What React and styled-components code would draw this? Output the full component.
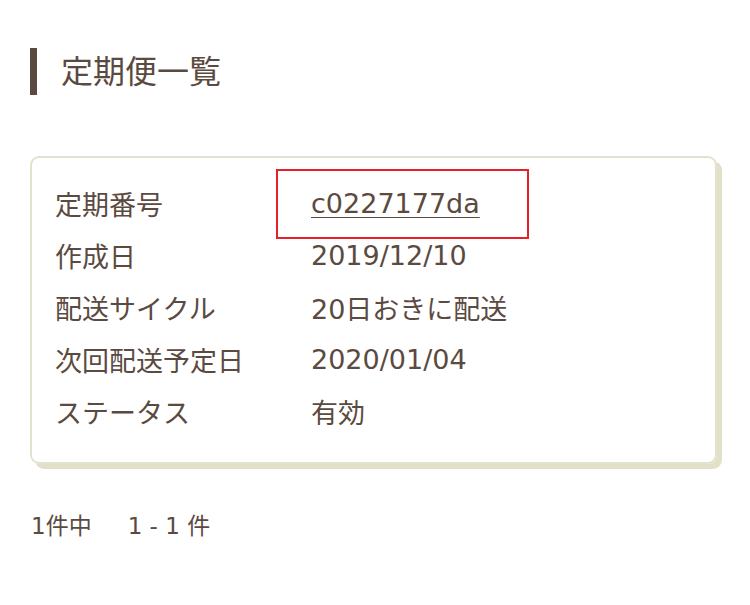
import React from "react";
import styled, { createGlobalStyle } from "styled-components";

const Global = createGlobalStyle`
  html, body { margin: 0; padding: 0; background: #fff; }
  body {
    font-family: "DejaVu Sans", "Noto Sans CJK JP", sans-serif;
    color: #5b4a3f;
  }
`;

const Page = styled.div`
  width: 750px;
  padding: 48px 30px 0 30px;
  box-sizing: border-box;
`;

const Title = styled.h1`
  margin: 0;
  height: 47px;
  display: flex;
  align-items: center;
  border-left: 7px solid #5b4a3f;
  padding-left: 24px;
  font-size: 32px;
  font-weight: normal;
  line-height: 1;
`;

const Card = styled.div`
  margin-top: 61px;
  width: 687px;
  box-sizing: border-box;
  border: 2px solid #e4e1cd;
  border-radius: 9px;
  box-shadow: 5px 5px 0 #e3e0ca;
  padding: 19px 24px 25px 23px;
`;

const Grid = styled.dl`
  margin: 0;
  display: grid;
  grid-template-columns: 256px 1fr;
  grid-auto-rows: 52px;
  align-items: center;
  font-size: 27px;
`;

const Label = styled.dt`
  margin: 0;
`;

const Value = styled.dd`
  margin: 0;
`;

const LinkWrap = styled.span`
  position: relative;
  display: inline-block;
  &::after {
    content: "";
    position: absolute;
    left: -35px;
    top: 50%;
    transform: translateY(-50%);
    margin-top: 1px;
    width: 253px;
    height: 70px;
    box-sizing: border-box;
    border: 2px solid #e6202b;
    pointer-events: none;
  }
`;

const Link = styled.a`
  color: #5b4a3f;
  text-decoration: underline;
  text-underline-offset: 4px;
  text-decoration-thickness: 1px;
`;

const Footer = styled.div`
  margin-top: 43px;
  font-size: 23px;
  display: flex;
  gap: 36px;
  padding-left: 1px;
`;

const rows = [
  ["作成日", "2019/12/10"],
  ["配送サイクル", "20日おきに配送"],
  ["次回配送予定日", "2020/01/04"],
  ["ステータス", "有効"],
];

export default function App() {
  return (
    <>
      <Global />
      <Page>
        <Title>定期便一覧</Title>
        <Card>
          <Grid>
            <Label>定期番号</Label>
            <Value>
              <LinkWrap>
                <Link href="#">c0227177da</Link>
              </LinkWrap>
            </Value>
            {rows.map(([l, v]) => (
              <React.Fragment key={l}>
                <Label>{l}</Label>
                <Value>{v}</Value>
              </React.Fragment>
            ))}
          </Grid>
        </Card>
        <Footer>
          <span>1件中</span>
          <span>1 - 1 件</span>
        </Footer>
      </Page>
    </>
  );
}
